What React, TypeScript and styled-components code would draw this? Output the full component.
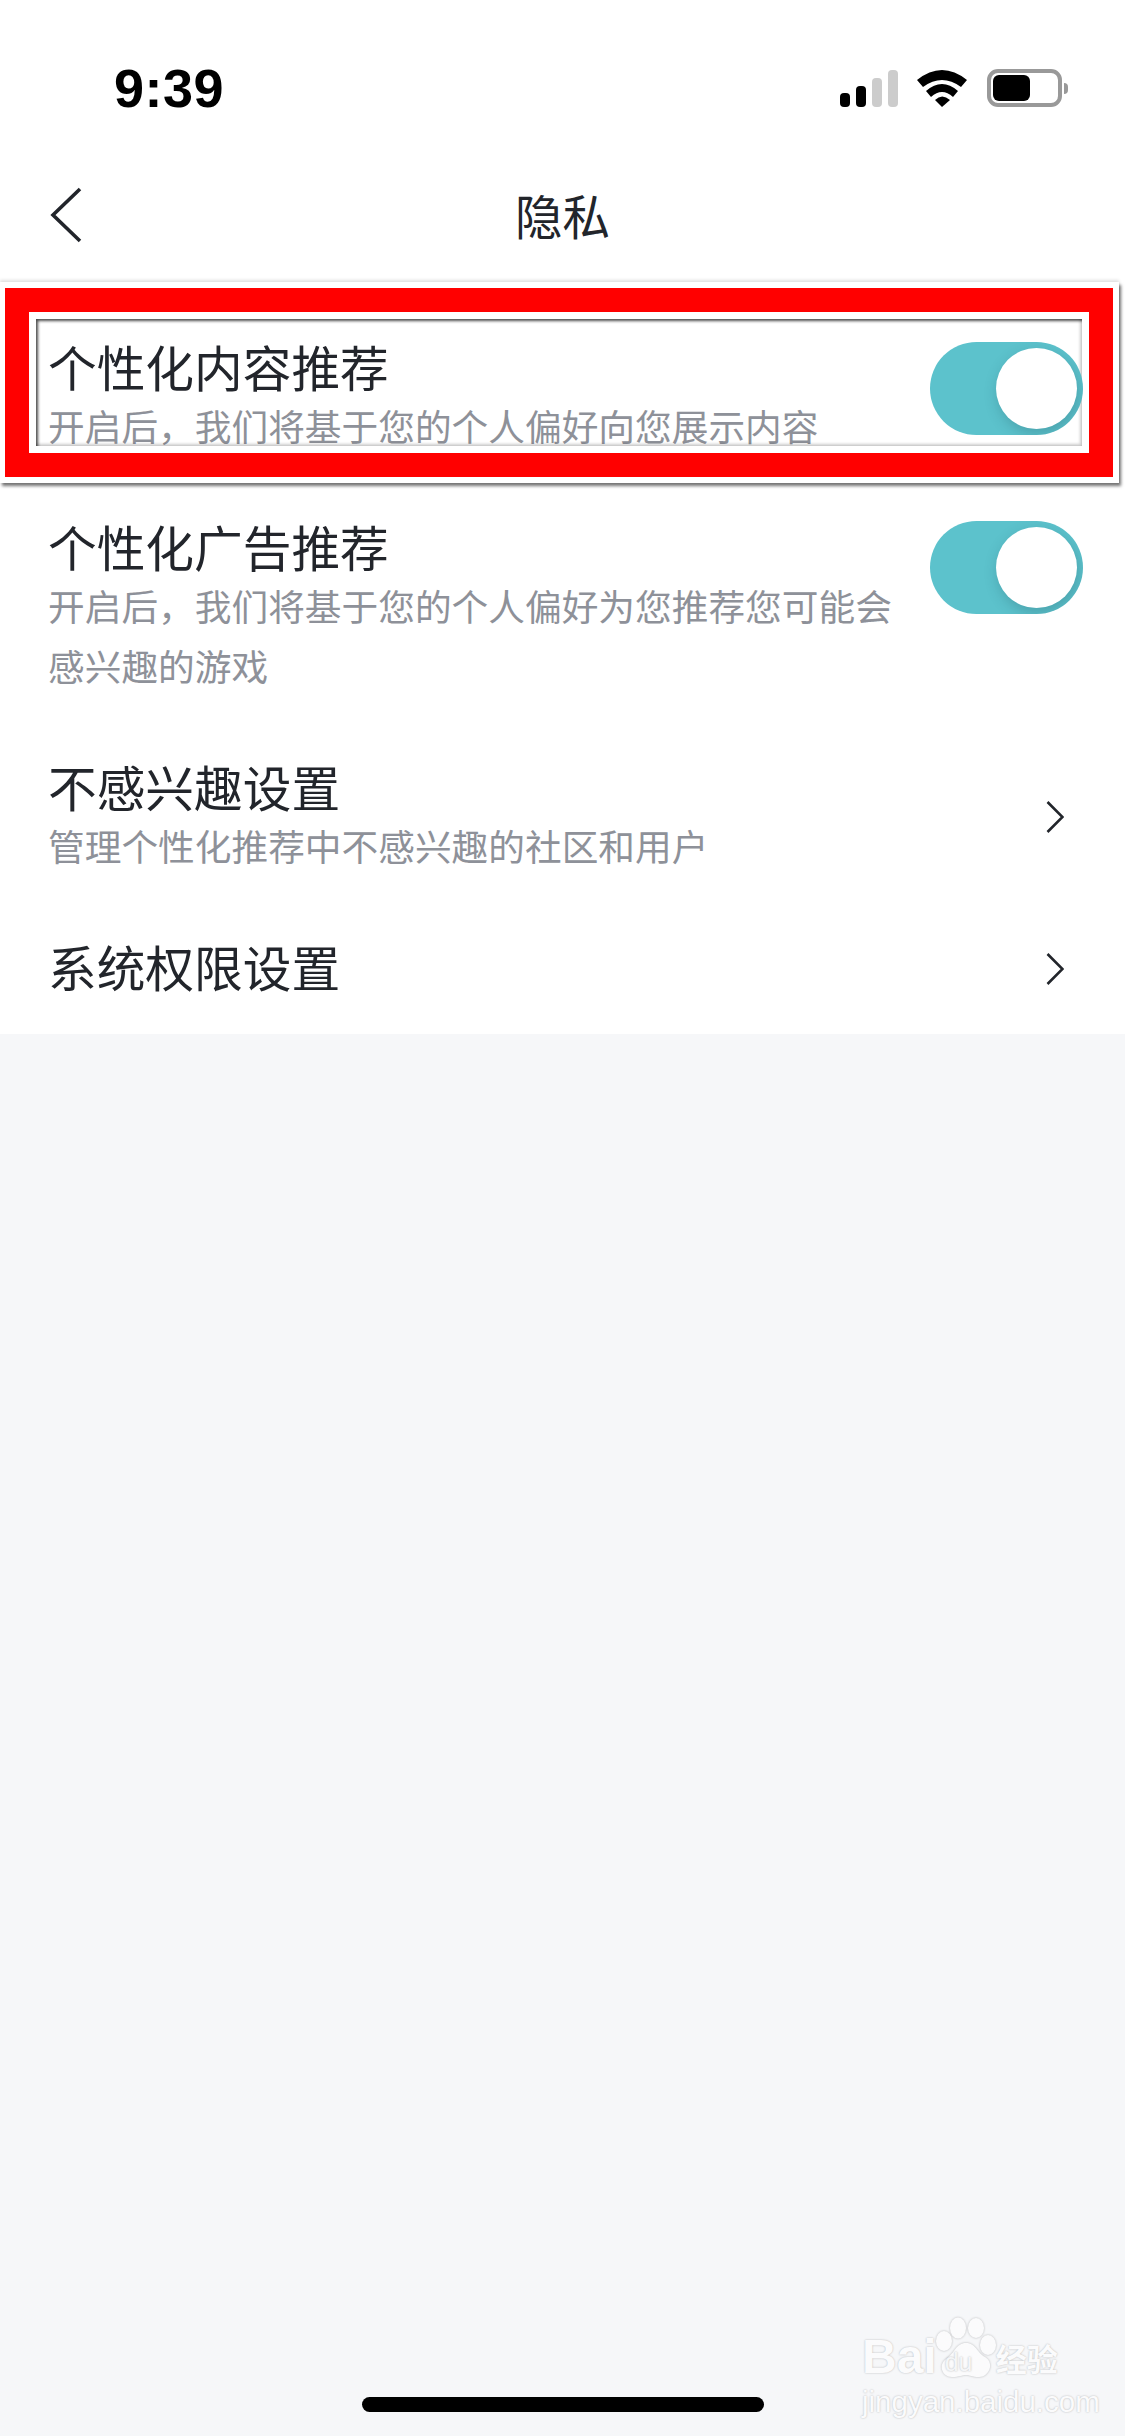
import { FC } from 'react';
import styled, { createGlobalStyle } from 'styled-components';

const GlobalStyle = createGlobalStyle`
  html, body {
    margin: 0;
    padding: 0;
    background: #f6f7f9;
  }
  body {
    font-family: "Noto Sans CJK SC", "Noto Sans", sans-serif;
  }
`;

const Page = styled.div`
  position: relative;
  width: 1125px;
  height: 2436px;
  overflow: hidden;
  background: #f6f7f9;
`;

const Header = styled.header`
  background: #fff;
`;

const StatusBar = styled.div`
  height: 132px;
  box-sizing: border-box;
  padding: 61px 56px 0 114px;
  display: flex;
  justify-content: space-between;
  align-items: flex-start;
`;

const Time = styled.span`
  font-family: "Liberation Sans", Arial, sans-serif;
  font-size: 54px;
  font-weight: 700;
  line-height: 54px;
  letter-spacing: 0.5px;
  color: #000;
`;

const StatusIcons = styled.div`
  display: flex;
  align-items: flex-end;
  gap: 19px;
  margin-top: 8px;
`;

const Signal = styled.div`
  display: flex;
  align-items: flex-end;
  gap: 6px;
`;

const SignalBar = styled.span<{ $h: number; $off?: boolean }>`
  width: 10px;
  height: ${(p) => p.$h}px;
  border-radius: 4px;
  background: ${(p) => (p.$off ? '#cccccc' : '#000')};
`;

const Battery = styled.div`
  position: relative;
  width: 75px;
  height: 38px;
  box-sizing: border-box;
  border: 4px solid #999;
  border-radius: 11px;
  padding: 2px;
  margin-right: 7px;

  &::after {
    content: '';
    position: absolute;
    right: -10px;
    top: 10px;
    width: 4px;
    height: 11px;
    background: #999;
    border-radius: 0 4px 4px 0;
  }
`;

const BatteryFill = styled.div`
  width: 37px;
  height: 100%;
  background: #000;
  border-radius: 6px;
`;

const NavBar = styled.nav`
  height: 172px;
  display: flex;
  align-items: center;
  justify-content: center;
  position: relative;
`;

const BackIcon = styled.svg`
  position: absolute;
  left: 50px;
  top: 55px;
`;

const NavTitle = styled.h1`
  margin: 0 0 7px;
  font-size: 47.5px;
  font-weight: 400;
  line-height: 60px;
  color: #22252b;
`;

const List = styled.section`
  background: #fff;
  width: 100%;
`;

const Row = styled.div<{ $plain?: boolean }>`
  display: flex;
  justify-content: space-between;
  align-items: ${(p) => (p.$plain ? 'center' : 'flex-start')};
  box-sizing: border-box;
  padding: ${(p) => (p.$plain ? '0 42px 0 48px' : '34px 42px 29px 48px')};
  min-height: ${(p) => (p.$plain ? '130px' : 'auto')};
`;

const RowLink = styled(Row)`
  align-items: center;
`;

const RowText = styled.div`
  width: 860px;
`;

const RowTitle = styled.div`
  font-size: 48.7px;
  line-height: 57px;
  color: #22252b;
`;

const PlainTitle = styled(RowTitle)`
  margin-bottom: 6px;
`;

const RowSub = styled.div`
  font-size: 36.7px;
  line-height: 60px;
  color: #8e9199;
`;

const Track = styled.div<{ $top: number }>`
  position: relative;
  z-index: 2;
  flex: none;
  width: 153px;
  height: 93px;
  margin-top: ${(p) => p.$top}px;
  border-radius: 47px;
  background: #5cc2cc;
  overflow: hidden;
`;

const Knob = styled.span`
  position: absolute;
  top: 6px;
  right: 6px;
  width: 81px;
  height: 81px;
  border-radius: 50%;
  background: #fff;
  box-shadow: 2px 5px 14px rgba(30, 80, 90, 0.28);
`;

const Chevron = styled.svg`
  flex: none;
  margin-right: 19px;
`;

const Frame = styled.div`
  position: absolute;
  left: 0;
  top: 282px;
  width: 1119px;
  height: 201px;
  box-sizing: border-box;
  border: solid #fff;
  border-width: 6px 6px 6px 5px;
  box-shadow: 2px 3px 3px rgba(0, 0, 0, 0.55), 0 -2px 3px rgba(0, 0, 0, 0.12);
  pointer-events: none;
`;

const FrameRed = styled.div`
  height: 100%;
  box-sizing: border-box;
  border: 24px solid #ff0000;
`;

const FrameInner = styled.div`
  height: 100%;
  box-sizing: border-box;
  border: 7px solid #fff;
`;

const FrameShade = styled.div`
  height: 100%;
  box-shadow: inset 2px 2px 3px rgba(0, 0, 0, 0.7),
    inset -2px -2px 3px rgba(0, 0, 0, 0.2);
`;

const HomeIndicator = styled.div`
  position: absolute;
  left: 362px;
  bottom: 24px;
  width: 402px;
  height: 15px;
  border-radius: 8px;
  background: #000;
`;

const Watermark = styled.div`
  position: absolute;
  left: 862px;
  top: 2317px;
  width: 204px;
  color: #fbfbfc;
  text-shadow: 0 0 2px rgba(0, 0, 0, 0.28);
`;

const LogoLine = styled.div`
  display: flex;
  align-items: flex-end;
  height: 62px;
`;

const LogoWord = styled.span`
  font-family: "Liberation Sans", Arial, sans-serif;
  font-size: 48px;
  font-weight: 700;
  line-height: 44px;
`;

const LogoCn = styled.span`
  font-size: 31px;
  font-weight: 700;
  line-height: 42px;
  white-space: nowrap;
  margin-left: -1px;
`;

const Paw = styled.div`
  position: relative;
  width: 62px;
  height: 62px;
  flex: none;
  margin-left: -2px;
`;

const PawSvg = styled.svg`
  display: block;
  filter: drop-shadow(0 0 1px rgba(0, 0, 0, 0.25));
`;

const PawText = styled.span`
  position: absolute;
  left: 10px;
  top: 32px;
  font-family: "Liberation Sans", Arial, sans-serif;
  font-size: 25px;
  line-height: 26px;
  color: #f5f6f8;
`;

const LogoUrl = styled.div`
  font-family: "Liberation Sans", Arial, sans-serif;
  font-size: 29.5px;
  line-height: 34px;
  margin-top: 6px;
  white-space: nowrap;
`;

const Toggle: FC<{ top: number }> = ({ top }) => (
  <Track $top={top}>
    <Knob />
  </Track>
);

const ChevronRight: FC = () => (
  <Chevron width="18" height="32" viewBox="0 0 18 32" fill="none">
    <path d="M1.5 1 L16.5 16 L1.5 31" stroke="#22252b" strokeWidth="2.6" />
  </Chevron>
);

const App: FC = () => (
  <Page lang="zh-CN">
    <GlobalStyle />
    <Header>
      <StatusBar>
        <Time>9:39</Time>
        <StatusIcons>
          <Signal>
            <SignalBar $h={14} />
            <SignalBar $h={21} />
            <SignalBar $h={29} $off />
            <SignalBar $h={37} $off />
          </Signal>
          <svg width="51" height="37" viewBox="0 0 51 37" fill="#000">
            <path d="M0 10 Q25 -10 50 10 L44 17 Q25 3 6 17 Z" />
            <path d="M9 21 Q25 7 41 21 L36 27 Q25 17 14 27 Z" />
            <path d="M18 30 Q25 23 33 30 L25 37 Z" />
          </svg>
          <Battery>
            <BatteryFill />
          </Battery>
        </StatusIcons>
      </StatusBar>
      <NavBar>
        <BackIcon width="32" height="56" viewBox="0 0 32 56" fill="none">
          <path d="M30 2 L3 28 L30 54" stroke="#22252b" strokeWidth="3.6" />
        </BackIcon>
        <NavTitle>隐私</NavTitle>
      </NavBar>
    </Header>
    <List>
      <Row>
        <RowText>
          <RowTitle>个性化内容推荐</RowTitle>
          <RowSub>开启后，我们将基于您的个人偏好向您展示内容</RowSub>
        </RowText>
        <Toggle top={4} />
      </Row>
      <Row>
        <RowText>
          <RowTitle>个性化广告推荐</RowTitle>
          <RowSub>开启后，我们将基于您的个人偏好为您推荐您可能会感兴趣的游戏</RowSub>
        </RowText>
        <Toggle top={3} />
      </Row>
      <RowLink>
        <RowText>
          <RowTitle>不感兴趣设置</RowTitle>
          <RowSub>管理个性化推荐中不感兴趣的社区和用户</RowSub>
        </RowText>
        <ChevronRight />
      </RowLink>
      <Row $plain>
        <PlainTitle>系统权限设置</PlainTitle>
        <ChevronRight />
      </Row>
    </List>
    <Frame>
      <FrameRed>
        <FrameInner>
          <FrameShade />
        </FrameInner>
      </FrameRed>
    </Frame>
    <Watermark>
      <LogoLine>
        <LogoWord>Bai</LogoWord>
        <Paw>
          <PawSvg width="62" height="62" viewBox="0 0 62 62" fill="#fbfbfc">
            <ellipse cx="9" cy="24" rx="8" ry="10" />
            <ellipse cx="23" cy="11" rx="8" ry="10.5" />
            <ellipse cx="41" cy="11" rx="8" ry="10" />
            <ellipse cx="53" cy="28" rx="8" ry="10" />
            <path d="M31 26 C41 26 42 36 50 40 C60 46 54 60 44 60 C37 60 35 58 31 58 C27 58 24 60 17 60 C7 60 3 48 11 42 C20 36 21 26 31 26 Z" />
          </PawSvg>
          <PawText>du</PawText>
        </Paw>
        <LogoCn>经验</LogoCn>
      </LogoLine>
      <LogoUrl>jingyan.baidu.com</LogoUrl>
    </Watermark>
    <HomeIndicator />
  </Page>
);

export default App;
